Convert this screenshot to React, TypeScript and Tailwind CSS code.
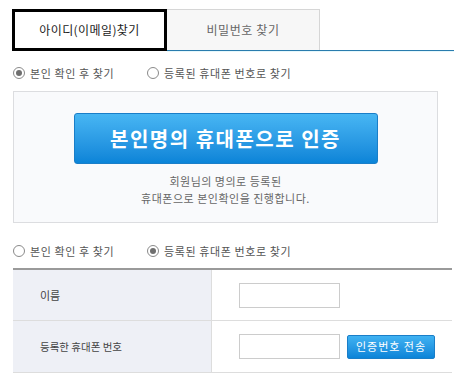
import React from "react";

function Radio({ checked }: { checked: boolean }) {
  return (
    <span className="relative inline-flex w-[12px] h-[12px] rounded-full border border-[#8a8a8a] bg-white items-center justify-center mr-[5px] shrink-0">
      {checked && <span className="w-[6px] h-[6px] rounded-full bg-[#6f6f6f]" />}
    </span>
  );
}

function RadioRow({ first }: { first: boolean }) {
  return (
    <div className="flex items-center h-[16px] text-[11px] tracking-[0.6px] text-[#555]">
      <label className="flex items-center w-[134px]">
        <Radio checked={first} />
        <span>본인 확인 후 찾기</span>
      </label>
      <label className="flex items-center">
        <Radio checked={!first} />
        <span>등록된 휴대폰 번호로 찾기</span>
      </label>
    </div>
  );
}

export default function App() {
  return (
    <div
      className="w-[467px] h-[383px] bg-white px-[13px] pt-[9px]"
      style={{ fontFamily: '"Noto Sans CJK KR", "Noto Sans", sans-serif' }}
    >
      {/* Tabs */}
      <div className="flex items-start">
        <div className="-ml-px w-[155px] h-[42px] border-[3px] border-black bg-white flex items-center justify-center text-[12px] tracking-[0.4px] text-[#222] relative z-10">
          아이디(이메일)찾기
        </div>
        <div className="flex-1 flex flex-col">
          <div className="flex">
            <div className="w-[153px] h-[41px] border-t border-r border-[#d6d6d6] bg-[#f7f7f7] flex items-center justify-center text-[12px] tracking-[0.6px] text-[#666]">
              비밀번호 찾기
            </div>
          </div>
          <div className="h-px bg-[#2a7cae]" />
          <div className="h-px bg-[#e6f8fc]" />
        </div>
      </div>

      {/* Radio row 1 */}
      <div className="mt-[13px]">
        <RadioRow first={true} />
      </div>

      {/* Box */}
      <div className="mt-[10px] w-[425px] h-[132px] border border-[#dcdde0] bg-[#f9fafc] flex flex-col items-center pt-[21px]">
        <button className="w-[304px] h-[51px] rounded-[3px] border border-[#1a7ec8] bg-gradient-to-b from-[#47b6f3] to-[#0a84d8] text-white text-[20px] font-bold flex items-center justify-center tracking-[1.5px]">
          본인명의 휴대폰으로 인증
        </button>
        <p className="mt-[9px] text-[11px] leading-[17px] tracking-[0.5px] text-[#666] text-center">
          회원님의 명의로 등록된
          <br />
          휴대폰으로 본인확인을 진행합니다.
        </p>
      </div>

      {/* Radio row 2 */}
      <div className="mt-[20px]">
        <RadioRow first={false} />
      </div>

      {/* Table */}
      <div className="mt-[9px] w-[439px] border-t-2 border-[#9a9a9a]">
        <div className="flex h-[51px] border-b border-[#dddddd]">
          <div className="w-[199px] bg-[#eef0f6] border-r border-[#dddddd] flex items-center pl-[27px] text-[11px] text-[#444]">
            이름
          </div>
          <div className="flex items-center pl-[27px]">
            <div className="w-[101px] h-[25px] border border-[#cccccc] bg-white" />
          </div>
        </div>
        <div className="flex h-[52px] border-b border-[#dddddd]">
          <div className="w-[199px] bg-[#eef0f6] border-r border-[#dddddd] flex items-center pl-[27px] text-[10.5px] text-[#444]">
            등록한 휴대폰 번호
          </div>
          <div className="flex items-center pl-[27px]">
            <div className="w-[101px] h-[25px] border border-[#cccccc] bg-white" />
            <button className="ml-[7px] w-[88px] h-[24px] rounded-[2px] border border-[#1a7ec8] bg-gradient-to-b from-[#3fb2f2] to-[#0a84d8] text-white text-[11px] tracking-[1px] flex items-center justify-center">
              인증번호 전송
            </button>
          </div>
        </div>
      </div>
    </div>
  );
}
